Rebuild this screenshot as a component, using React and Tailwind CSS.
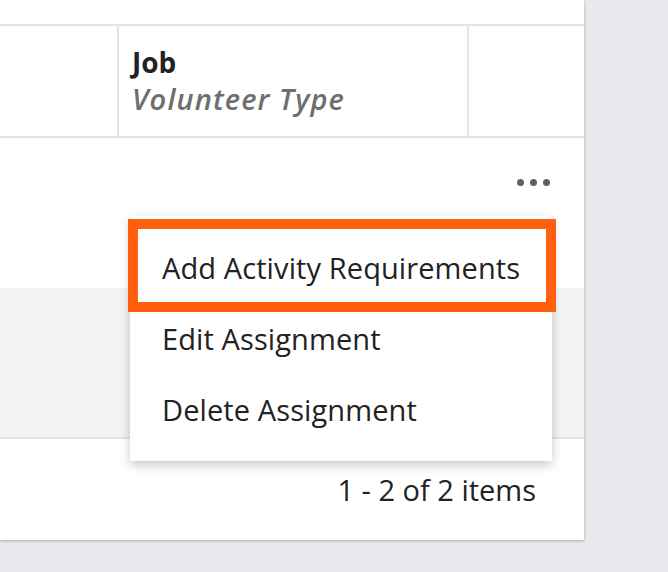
import React from 'react';

const menuItems = ['Add Activity Requirements', 'Edit Assignment', 'Delete Assignment'];

export default function App() {
  return (
    <main className="w-[668px] h-[572px] bg-[#e9eaee] overflow-hidden" style={{ fontFamily: '"Open Sans", sans-serif' }}>
      <div className="relative w-[584px] h-[540px] bg-white shadow-[0_1px_3px_rgba(0,0,0,0.28)] flex flex-col">
        {/* header row */}
        <div className="h-[24px] border-b-2 border-[#e4e4e4] box-content"></div>
        <div className="flex h-[110px] border-b-2 border-[#e4e4e4] box-content">
          <div className="w-[119px] border-r-2 border-[#e4e4e4]"></div>
          <div className="w-[350px] border-r-2 border-[#e4e4e4] pl-[13px] pt-[18px]">
            <div className="text-[28px] leading-[36px] font-bold text-[#222]">Job</div>
            <div className="text-[29px] leading-[38px] italic font-semibold text-[#6e6e6e] tracking-[1.1px]">Volunteer Type</div>
          </div>
          <div className="flex-1"></div>
        </div>

        {/* rows */}
        <div className="h-[150px] flex justify-end pt-[41px] pr-[34px]">
          <div className="flex gap-[6px] h-[7px]">
            <span className="w-[7px] h-[7px] rounded-full bg-[#616161]"></span>
            <span className="w-[7px] h-[7px] rounded-full bg-[#616161]"></span>
            <span className="w-[7px] h-[7px] rounded-full bg-[#616161]"></span>
          </div>
        </div>
        <div className="h-[149px] bg-[#f4f4f4] border-b-2 border-[#e2e2e2] box-content"></div>

        {/* footer */}
        <div className="flex-1 flex justify-end pt-[32px] pr-[48px]">
          <span className="text-[29px] leading-[38px] text-[#222]">1 - 2 of 2 items</span>
        </div>

        {/* dropdown menu */}
        <div className="absolute left-[130px] top-[216px] w-[422px] bg-white py-[16px] shadow-[0_4px_10px_rgba(0,0,0,0.22)]">
          {menuItems.map((item) => (
            <div key={item} className="h-[71px] flex items-center pl-[32px] text-[29px] leading-[38px] tracking-[0.1px] text-[#222]">
              {item}
            </div>
          ))}
          <div className="absolute left-[-2px] top-[3px] w-[428px] h-[93px] border-[10px] border-[#ff5f0f] pointer-events-none"></div>
        </div>
      </div>
    </main>
  );
}
